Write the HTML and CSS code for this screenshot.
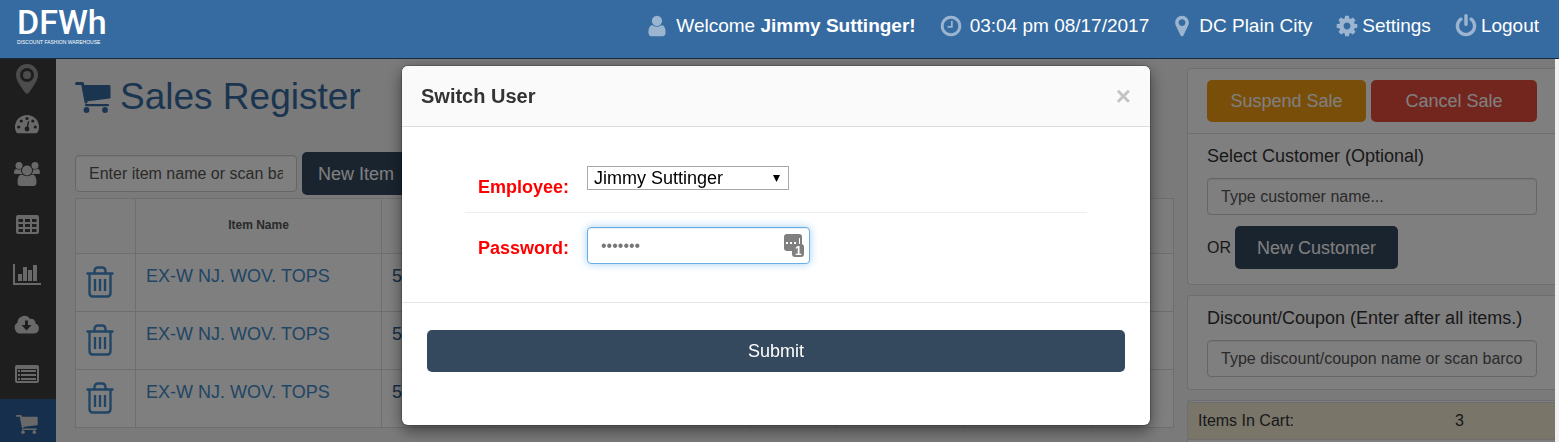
FILE: index.html
```html
<!DOCTYPE html>
<html lang="en">
<head>
    <meta charset="UTF-8">
    <meta name="viewport" content="width=device-width, initial-scale=1.0">
    <title>Sales Register - Discount Fashion Warehouse</title>
    <link rel="stylesheet" href="styles.css">
</head>
<body>
    <!-- Shared icon shapes -->
    <svg class="sprite" aria-hidden="true">
        <symbol id="icon-cart" viewBox="0 0 36 31">
            <path d="M1.500 1.500H7.500L11 20" fill="none" stroke="currentColor" stroke-width="3" stroke-linecap="round" stroke-linejoin="round"/>
            <path d="M8 3H34.500Q35.500 3 35.500 4V15.500Q35.500 16.500 34.500 16.600L11 19.500Z" fill="currentColor"/>
            <path d="M11 23.200H33" stroke="currentColor" stroke-width="2.200" stroke-linecap="round"/>
            <circle cx="11.500" cy="28" r="2.900" fill="currentColor"/>
            <circle cx="30" cy="28" r="2.900" fill="currentColor"/>
        </symbol>
        <symbol id="icon-trash" viewBox="0 0 28 32">
            <g fill="none" stroke="currentColor" stroke-width="2.400" stroke-linecap="round" stroke-linejoin="round">
                <path d="M1.500 7.500H26.500M3.500 8V27Q3.500 30.500 7 30.500H21Q24.500 30.500 24.500 27V8"/>
                <path d="M8.500 7V5.500Q8.500 1.500 12 1.500H16Q19.500 1.500 19.500 5.500V7"/>
                <path d="M9 13V25M14 13V25M19 13V25" stroke-linecap="butt"/>
            </g>
        </symbol>
    </svg>

    <header class="header">
        <a href="#" class="logo">
            <span class="logo-name">DFWh</span>
            <span class="logo-tagline">DISCOUNT FASHION WAREHOUSE</span>
        </a>
        <div class="header-info">
            <span class="info-item">
                <svg class="icon" viewBox="0 0 1792 1792"><path fill="currentColor" d="M1536 1399q0 109-62.500 187t-150.500 78h-854q-88 0-150.500-78t-62.500-187q0-85 8.500-160.500t31.500-152 58.500-131 94-89 134.500-34.500q131 128 313 128t313-128q76 0 134.500 34.500t94 89 58.500 131 31.500 152 8.500 160.500zm-256-887q0 159-112.500 271.500t-271.500 112.500-271.500-112.500-112.500-271.500 112.500-271.500 271.500-112.500 271.500 112.500 112.500 271.500z"/></svg>
                <span>Welcome <b>Jimmy Suttinger!</b></span>
            </span>
            <span class="info-item">
                <svg class="icon" viewBox="0 0 1792 1792"><path fill="currentColor" d="M1024 544v448q0 14-9 23t-23 9h-320q-14 0-23-9t-9-23v-64q0-14 9-23t23-9h224v-352q0-14 9-23t23-9h64q14 0 23 9t9 23zm416 352q0-148-73-273t-198-198-273-73-273 73-198 198-73 273 73 273 198 198 273 73 273-73 198-198 73-273zm224 0q0 209-103 385.500t-279.500 279.500-385.500 103-385.500-103-279.500-279.500-103-385.500 103-385.500 279.500-279.500 385.500-103 385.500 103 279.500 279.500 103 385.500z"/></svg>
                <span>03:04 pm 08/17/2017</span>
            </span>
            <span class="info-item">
                <svg class="icon icon-narrow" viewBox="150 0 1492 1792"><path fill="currentColor" d="M1152 640q0-106-75-181t-181-75-181 75-75 181 75 181 181 75 181-75 75-181zm256 0q0 109-33 179l-364 774q-16 33-47.500 52t-67.500 19-67.500-19-46.500-52l-365-774q-33-70-33-179 0-212 150-362t362-150 362 150 150 362z"/></svg>
                <span>DC Plain City</span>
            </span>
            <a href="#" class="info-item info-link">
                <svg class="icon" viewBox="0 0 1792 1792"><path fill="currentColor" d="M1152 896q0-106-75-181t-181-75-181 75-75 181 75 181 181 75 181-75 75-181zm512-109v222q0 12-8 23t-20 13l-185 28q-19 54-39 91 35 50 107 138 10 12 10 25t-9 23q-27 37-99 108t-94 71q-12 0-26-9l-138-108q-44 23-91 38-16 136-29 186-7 28-36 28h-222q-14 0-24.500-8.500t-11.500-21.500l-28-184q-49-16-90-37l-141 107q-10 9-25 9-14 0-25-11-126-114-165-168-7-10-7-23 0-12 8-23 15-21 51-66.500t54-70.500q-27-50-41-99l-183-27q-13-2-21-12.500t-8-23.500v-222q0-12 8-23t19-13l186-28q14-46 39-92-40-57-107-138-10-12-10-24 0-10 9-23 26-36 98.500-107.500t94.500-71.500q13 0 26 10l138 107q44-23 91-38 16-136 29-186 7-28 36-28h222q14 0 24.500 8.500t11.500 21.500l28 184q49 16 90 37l142-107q9-9 24-9 13 0 25 10 129 119 165 170 7 8 7 22 0 12-8 23-15 21-51 66.500t-54 70.500q26 50 41 98l183 28q13 2 21 12.500t8 23.500z"/></svg>
                <span>Settings</span>
            </a>
            <a href="#" class="info-item info-link">
                <svg class="icon" viewBox="0 0 1792 1792"><path fill="currentColor" d="M1664 896q0 156-61 298t-164 245-245 164-298 61-298-61-245-164-164-245-61-298q0-182 80.500-343t226.500-270q43-32 95.500-25t83.500 50q32 42 24.500 94.500t-49.500 84.500q-98 74-151.500 181t-53.500 228q0 104 40.500 198.500t109.500 163.500 163.500 109.500 198.500 40.500 198.500-40.500 163.500-109.500 109.500-163.500 40.500-198.500q0-121-53.500-228t-151.500-181q-42-32-49.500-84.500t24.500-94.500q31-43 84-50t95 25q146 109 226.500 270t80.500 343zm-640-768v640q0 52-38 90t-90 38-90-38-38-90v-640q0-52 38-90t90-38 90 38 38 90z"/></svg>
                <span>Logout</span>
            </a>
        </div>
    </header>

    <div class="page">
        <nav class="sidebar">
            <a href="#" class="side-link side-pin" aria-label="Locations">
                <svg width="22" height="30" viewBox="0 0 22 30"><path fill="currentColor" fill-rule="evenodd" d="M11 0A11 11 0 0 1 22 11C22 17 16 24 13 28.500Q11 31 9 28.500C6 24 0 17 0 11A11 11 0 0 1 11 0ZM11 4A7 7 0 1 0 11 18A7 7 0 1 0 11 4Z"/><circle cx="11" cy="11" r="4" fill="currentColor"/></svg>
            </a>
            <a href="#" class="side-link" aria-label="Dashboard">
                <svg width="24" height="20" viewBox="0 0 24 20"><path fill="currentColor" d="M12 1A12 12 0 0 1 24 13Q24 16 22.500 18.500Q22 19.300 21 19.300H3Q2 19.300 1.500 18.500Q0 16 0 13A12 12 0 0 1 12 1Z"/><g fill="#3c3c3c"><circle cx="3.700" cy="13" r="1.600"/><circle cx="6.200" cy="7" r="1.600"/><circle cx="12" cy="4.500" r="1.600"/><circle cx="17.800" cy="7" r="1.600"/><circle cx="20.300" cy="13" r="1.600"/><circle cx="12" cy="15" r="2.400"/></g><path d="M12 15L13.500 8" stroke="#3c3c3c" stroke-width="1.400" stroke-linecap="round"/></svg>
            </a>
            <a href="#" class="side-link" aria-label="Customers">
                <svg width="26" height="24" viewBox="0 0 26 24"><g fill="currentColor"><circle cx="5" cy="3.500" r="3.500"/><circle cx="21" cy="3.500" r="3.500"/><path d="M0 11Q0 7 2.500 7Q5 8 7 7.300Q6.500 10.500 8.500 12H2Q0 12 0 11ZM26 11Q26 7 23.500 7Q21 8 19 7.300Q19.500 10.500 17.500 12H24Q26 12 26 11Z"/><circle cx="13" cy="8.500" r="5"/><path d="M3.500 20.500Q3.500 12.500 8 12.500Q13 16 18 12.500Q22.500 12.500 22.500 20.500Q22.500 24 19 24H7Q3.500 24 3.500 20.500Z"/></g></svg>
            </a>
            <a href="#" class="side-link" aria-label="Inventory">
                <svg width="23" height="19" viewBox="0 0 23 19"><path fill="currentColor" fill-rule="evenodd" d="M2 0H21Q23 0 23 2V17Q23 19 21 19H2Q0 19 0 17V2Q0 0 2 0ZM2.500 4V7H7V4ZM9 4V7H14V4ZM16 4V7H20.500V4ZM2.500 9V12H7V9ZM9 9V12H14V9ZM16 9V12H20.500V9ZM2.500 14V17H7V14ZM9 14V17H14V14ZM16 14V17H20.500V14Z"/></svg>
            </a>
            <a href="#" class="side-link" aria-label="Reports">
                <svg width="28" height="21" viewBox="0 0 28 21"><path fill="currentColor" d="M0 0H2V19H28V21H0ZM5 10H9V17H5ZM10 3H14V17H10ZM15 6H19V17H15ZM20 1H24V17H20Z"/></svg>
            </a>
            <a href="#" class="side-link" aria-label="Receiving">
                <svg width="26" height="19" viewBox="0 0 26 19"><path fill="currentColor" fill-rule="evenodd" d="M6 18.500A6 6 0 0 1 3.500 7.500A6.800 6.800 0 0 1 16 4A4.200 4.200 0 0 1 21.500 8.500A5.200 5.200 0 0 1 20.500 18.500ZM11 5.500V10H7.500L12.500 15.500L17.500 10H14V5.500Z"/></svg>
            </a>
            <a href="#" class="side-link" aria-label="Orders">
                <svg width="24" height="18" viewBox="0 0 24 18"><path fill="currentColor" fill-rule="evenodd" d="M2 0H22Q24 0 24 2V16Q24 18 22 18H2Q0 18 0 16V2Q0 0 2 0ZM2 4V16H22V4Z"/><path fill="currentColor" d="M3 5H5V7H3ZM6 5H21V7H6ZM3 9H5V11H3ZM6 9H21V11H6ZM3 13H5V15H3ZM6 13H21V15H6Z"/></svg>
            </a>
            <a href="#" class="side-link active" aria-label="Sales">
                <svg width="22" height="19"><use href="#icon-cart"/></svg>
            </a>
        </nav>

        <main class="content">
            <h1><svg class="title-icon"><use href="#icon-cart"/></svg>Sales Register</h1>
            <form class="item-search">
                <input type="text" class="form-control" aria-label="Item" placeholder="Enter item name or scan barcode">
                <button type="button" class="btn btn-primary btn-item">New Item</button>
            </form>
            <table class="register">
                <colgroup>
                    <col class="col-delete">
                    <col class="col-name">
                    <col class="col-number">
                    <col class="col-stock">
                    <col class="col-price">
                    <col class="col-qty">
                    <col class="col-disc">
                    <col class="col-disc">
                    <col class="col-total">
                </colgroup>
                <thead>
                    <tr><th></th><th>Item Name</th><th></th><th></th><th></th><th></th><th></th><th></th><th></th></tr>
                </thead>
                <tbody>
                    <tr>
                        <td><a href="#" aria-label="Delete item"><svg class="trash"><use href="#icon-trash"/></svg></a></td>
                        <td><a href="#">EX-W NJ. WOV. TOPS</a></td>
                        <td>5</td><td></td><td></td><td></td><td></td><td></td><td></td>
                    </tr>
                    <tr>
                        <td><a href="#" aria-label="Delete item"><svg class="trash"><use href="#icon-trash"/></svg></a></td>
                        <td><a href="#">EX-W NJ. WOV. TOPS</a></td>
                        <td>5</td><td></td><td></td><td></td><td></td><td></td><td></td>
                    </tr>
                    <tr>
                        <td><a href="#" aria-label="Delete item"><svg class="trash"><use href="#icon-trash"/></svg></a></td>
                        <td><a href="#">EX-W NJ. WOV. TOPS</a></td>
                        <td>5</td><td></td><td></td><td></td><td></td><td></td><td></td>
                    </tr>
                </tbody>
            </table>
        </main>

        <aside class="sale-panel">
            <section class="box">
                <div class="sale-actions">
                    <button type="button" class="btn btn-warning">Suspend Sale</button>
                    <button type="button" class="btn btn-danger">Cancel Sale</button>
                </div>
                <div class="box-body">
                    <label for="customer">Select Customer (Optional)</label>
                    <input type="text" id="customer" class="form-control" placeholder="Type customer name...">
                    <div class="or-row">
                        <span>OR</span>
                        <button type="button" class="btn btn-primary btn-customer">New Customer</button>
                    </div>
                </div>
            </section>
            <section class="box">
                <div class="box-body">
                    <label for="coupon">Discount/Coupon (Enter after all items.)</label>
                    <input type="text" id="coupon" class="form-control" placeholder="Type discount/coupon name or scan barcode...">
                </div>
            </section>
            <section class="box totals">
                <div class="total-row">
                    <span>Items In Cart:</span>
                    <span>3</span>
                </div>
            </section>
        </aside>
    </div>

    <!-- Switch user dialog -->
    <div class="backdrop">
        <form class="modal" role="dialog" aria-labelledby="modal-title">
            <div class="modal-header">
                <h2 id="modal-title">Switch User</h2>
                <button type="button" class="close" aria-label="Close">&times;</button>
            </div>
            <div class="modal-body">
                <div class="form-row">
                    <label for="employee">Employee:</label>
                    <div class="select-wrap">
                        <select id="employee">
                            <option>Jimmy Suttinger</option>
                        </select>
                        <svg class="select-arrow" viewBox="0 0 8 8"><path d="M0 0H8L4 8Z"/></svg>
                    </div>
                </div>
                <div class="form-row">
                    <label for="password">Password:</label>
                    <div class="password-wrap">
                        <input type="password" id="password" class="form-control" value="passwrd">
                        <svg class="key-badge" viewBox="0 0 20 23">
                            <rect width="18" height="17" rx="3" fill="#7f7f7f"/>
                            <path d="M2 8H4V10H2ZM6 8H8V10H6ZM10 8H12V10H10ZM15 4H16V10H15Z" fill="#fff"/>
                            <rect x="8" y="10" width="12" height="13" rx="3" fill="#7f7f7f"/>
                            <text x="11" y="21">1</text>
                        </svg>
                    </div>
                </div>
            </div>
            <div class="modal-footer">
                <button type="submit" class="btn btn-primary">Submit</button>
            </div>
        </form>
    </div>
</body>
</html>
```
FILE: styles.css
```css
* {
    margin: 0;
    padding: 0;
    box-sizing: border-box;
}

body {
    font-family: "Liberation Sans", Arial, sans-serif;
    font-size: 16px;
    line-height: 20px;
    color: #333;
    background: #f1f1f1;
    height: 100vh;
    display: flex;
    flex-direction: column;
    overflow: hidden;
}

a {
    color: #428bca;
    text-decoration: none;
}

.sprite {
    display: none;
}

/* Top bar */
.header {
    flex: none;
    height: 59px;
    padding: 7px 20px 0 17px;
    background: #366ba1;
    border-bottom: 1px solid #16293f;
    display: flex;
    justify-content: space-between;
    align-items: flex-start;
}

.logo {
    color: #fff;
    display: flex;
    flex-direction: column;
}

.logo-name {
    font-family: Roboto, sans-serif;
    font-size: 34px;
    font-weight: 500;
    line-height: 31px;
}

.logo-tagline {
    font-family: "Liberation Sans", Arial, sans-serif;
    font-size: 5px;
    line-height: 8px;
}

.header-info {
    display: flex;
    gap: 23px;
    height: 38px;
    align-items: center;
}

.info-item {
    display: flex;
    align-items: center;
    gap: 7px;
    color: #fff;
    font-size: 19px;
    white-space: nowrap;
}

.info-link {
    gap: 3px;
}

.icon {
    width: 24px;
    height: 24px;
    color: #9bb5d0;
}

.icon-narrow {
    width: 20px;
}

/* Page columns */
.page {
    flex: 1;
    min-height: 0;
    margin-right: 4px;
    background: #f4f4f4;
    display: grid;
    grid-template-columns: 56px 1fr 368px;
    overflow: hidden;
}

.sidebar {
    background: #3c3c3c;
}

.side-link {
    display: flex;
    align-items: center;
    justify-content: center;
    height: 50px;
    padding-right: 2px;
    color: #d2d2d2;
}

.side-pin {
    height: 40px;
    color: #999;
}

.side-link.active {
    background: #2a5f9b;
}

.content {
    padding: 17px 13px 0 19px;
    min-width: 0;
}

h1 {
    display: flex;
    align-items: center;
    gap: 9px;
    color: #366ba1;
    font-size: 37px;
    font-weight: 400;
    line-height: 42px;
}

.title-icon {
    width: 36px;
    height: 31px;
}

.item-search {
    display: flex;
    align-items: center;
    gap: 5px;
    margin: 34px 0 3px;
}

.item-search .form-control {
    width: 222px;
}

.form-control {
    width: 100%;
    height: 37px;
    padding: 6px 13px;
    border: 1px solid #ccc;
    border-radius: 4px;
    background: #fff;
    font: inherit;
    color: #555;
    box-shadow: inset 0 1px 1px rgba(0, 0, 0, 0.08);
}

.form-control::placeholder {
    color: #555;
    opacity: 1;
}

.btn {
    height: 42px;
    border: none;
    border-radius: 5px;
    color: #fff;
    font: inherit;
    font-size: 18px;
    cursor: pointer;
}

.btn-primary {
    background: #34495e;
}

.btn-warning {
    background: #f39c12;
}

.btn-danger {
    background: #e74c3c;
}

.btn-item {
    height: 43px;
    padding: 0 16px;
}

.btn-customer {
    height: 43px;
    padding: 0 22px;
}

/* Register table */
.register {
    width: 100%;
    table-layout: fixed;
    border-collapse: collapse;
    background: #fff;
    font-size: 18px;
}

.register th,
.register td {
    border: 1px solid #ddd;
    vertical-align: top;
}

.register th {
    height: 55px;
    padding-bottom: 2px;
    background: #fafafa;
    color: #555;
    font-size: 12px;
    vertical-align: middle;
}

.register td {
    height: 58px;
    padding: 12px 10px 0;
    color: #2a5b8a;
}

.col-delete {
    width: 60px;
}

.col-name {
    width: 246px;
}

.col-number {
    width: 109px;
}

.col-stock {
    width: 96px;
}

.col-price {
    width: 164px;
}

.col-qty {
    width: 86px;
}

.col-disc {
    width: 128px;
}

.trash {
    display: block;
    width: 28px;
    height: 32px;
}

/* Sale panel */
.sale-panel {
    padding-top: 9px;
    display: flex;
    flex-direction: column;
    gap: 10px;
}

.box {
    background: #fff;
    border: 1px solid #ddd;
    border-right: none;
    border-radius: 4px 0 0 4px;
}

.sale-actions {
    display: flex;
    gap: 5px;
    padding: 11px 18px 11px 19px;
    border-bottom: 1px solid #ddd;
}

.sale-actions .btn-warning {
    flex: 159;
}

.sale-actions .btn-danger {
    flex: 166;
}

.box-body {
    padding: 12px 18px 12px 19px;
}

.box-body label {
    display: block;
    margin-bottom: 12px;
    font-size: 18px;
}

.or-row {
    display: flex;
    align-items: center;
    gap: 4px;
    margin: 11px 0 3px;
}

.total-row {
    display: grid;
    grid-template-columns: 257px 1fr;
    margin-top: 1px;
    padding: 8px 10px;
    background: #f3ead2;
    border-top: 1px solid #ddd;
    border-bottom: 1px solid #ddd;
}

.totals {
    flex: 1;
}

/* Dialog, laid over everything below the top bar */
.backdrop {
    position: fixed;
    top: 59px;
    right: 4px;
    bottom: 0;
    left: 0;
    padding: 7px 3px 0 0;
    background: rgba(0, 0, 0, 0.5);
    display: flex;
    justify-content: center;
    align-items: flex-start;
    overflow: hidden;
}

.modal {
    width: 100%;
    max-width: 748px;
    background: #fff;
    border-radius: 6px;
    box-shadow: 0 5px 15px rgba(0, 0, 0, 0.5), 0 0 1px 1px rgba(0, 0, 0, 0.2);
}

.modal-header {
    display: flex;
    justify-content: space-between;
    align-items: center;
    padding: 20px 19px;
    background: #fafafa;
    border-bottom: 1px solid #ddd;
    border-radius: 6px 6px 0 0;
}

.modal-header h2 {
    font-size: 20px;
    line-height: 20px;
}

.close {
    background: none;
    border: none;
    color: #c4c4c4;
    font: bold 26px/12px "Liberation Sans", Arial, sans-serif;
    cursor: pointer;
}

.modal-body {
    padding: 29px 63px 28px;
}

.form-row {
    display: flex;
    align-items: center;
    padding: 10px 0;
    min-height: 56px;
}

.form-row + .form-row {
    border-top: 1px solid #eee;
    padding-top: 14px;
}

.form-row label {
    width: 122px;
    padding: 5px 18px 0 0;
    color: #f00;
    font-size: 18px;
    font-weight: bold;
    text-align: right;
}

.select-wrap {
    position: relative;
    align-self: flex-start;
}

.select-wrap select {
    display: block;
    width: 202px;
    height: 24px;
    padding: 0 6px;
    appearance: none;
    background: #fff;
    border: 1px solid #a9a9a9;
    color: #000;
    font: 18px/20px "Liberation Sans", Arial, sans-serif;
}

.select-arrow {
    position: absolute;
    top: 9px;
    right: 9px;
    width: 7px;
    height: 7px;
    pointer-events: none;
}

.password-wrap {
    position: relative;
    width: 223px;
}

.password-wrap .form-control {
    color: #777;
    border-color: #66afe9;
    box-shadow: inset 0 1px 1px rgba(0, 0, 0, 0.08), 0 0 8px rgba(102, 175, 233, 0.6);
}

.key-badge {
    position: absolute;
    top: 7px;
    right: 6px;
    width: 20px;
    height: 23px;
}

.key-badge text {
    fill: #fff;
    font-size: 12px;
    font-weight: bold;
}

.modal-footer {
    padding: 27px 25px 53px;
    border-top: 1px solid #e5e5e5;
}

.modal-footer .btn {
    display: block;
    width: 100%;
}
```
